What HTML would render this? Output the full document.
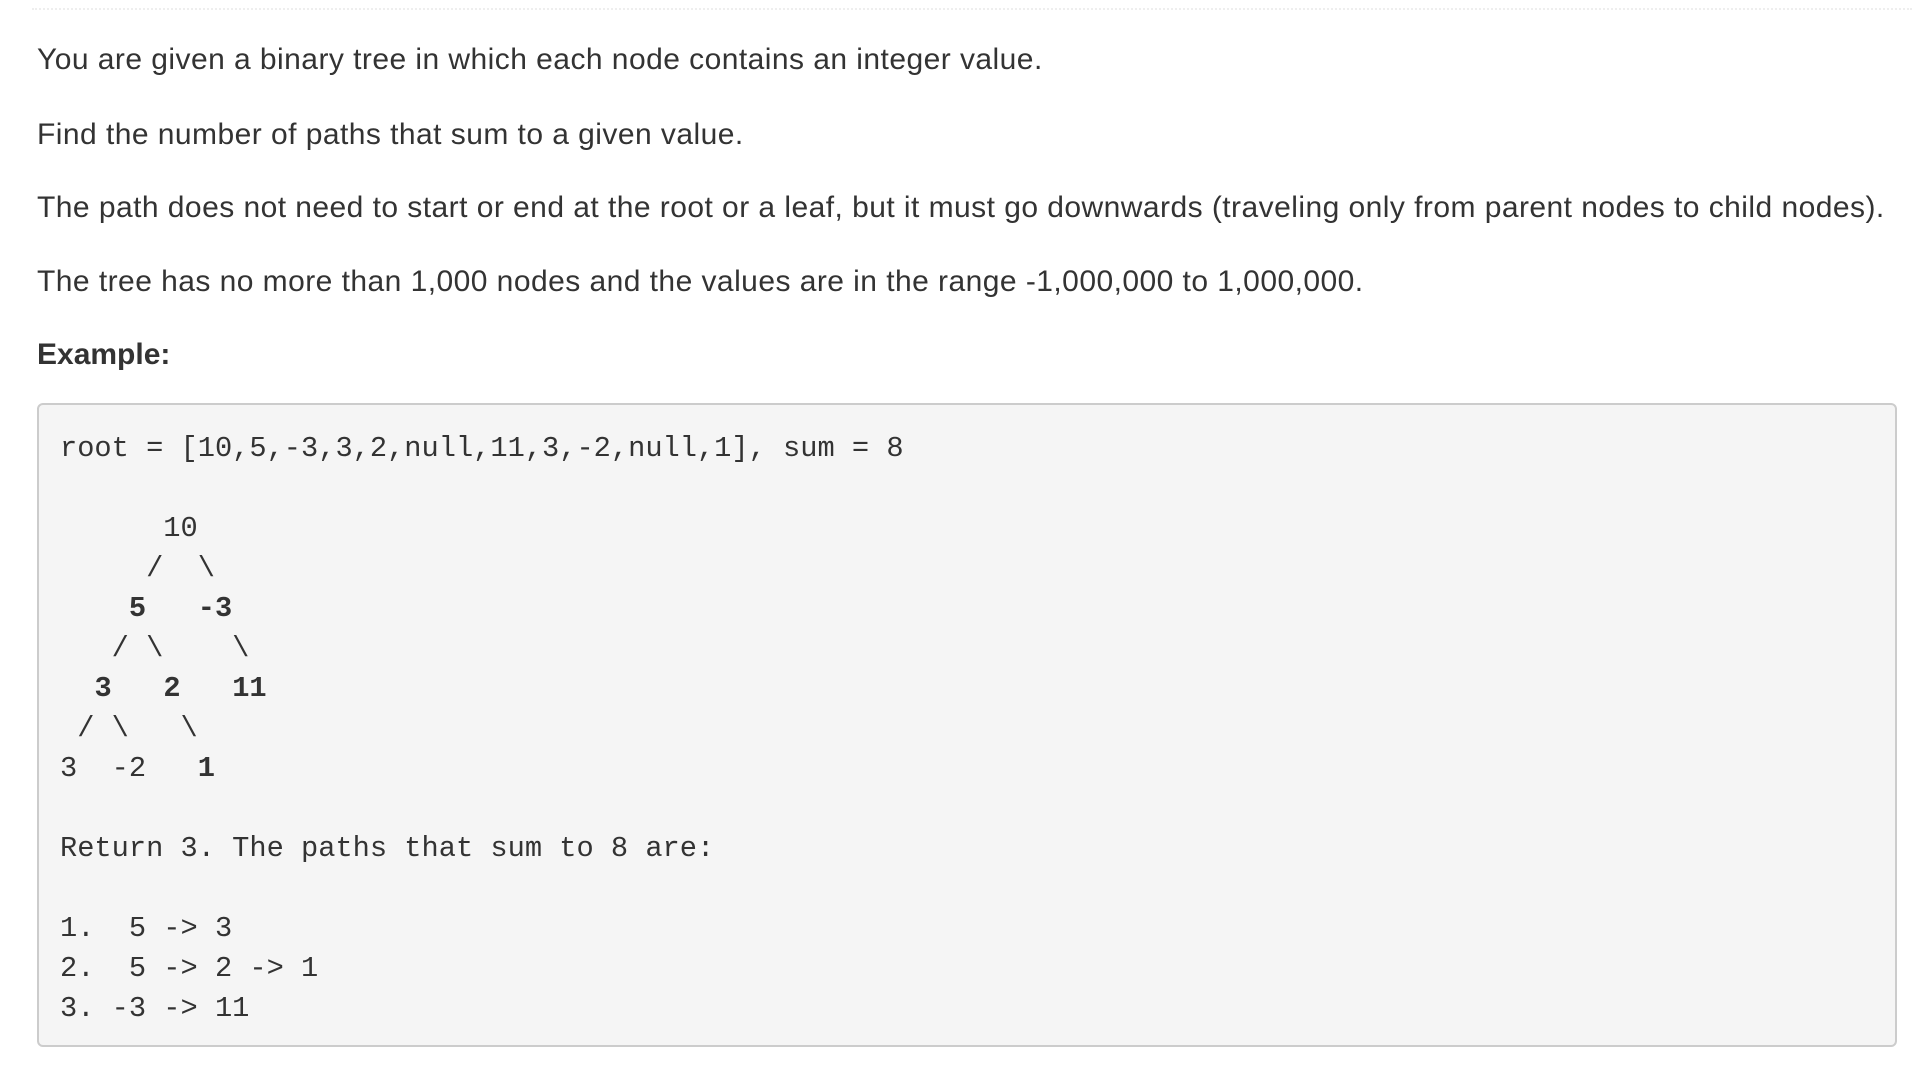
<!DOCTYPE html>
<html><head><meta charset="utf-8"><style>
html,body{margin:0;padding:0;background:#fff;width:1926px;height:1074px;overflow:hidden}
.dots{position:absolute;left:32px;top:8px;width:1880px;border-top:2px dotted #eee}
.p{position:absolute;left:37px;font:30px/40px "Liberation Sans",Arial,sans-serif;letter-spacing:0.45px;color:#333;white-space:nowrap}
.box{position:absolute;left:37px;top:403px;width:1856px;height:640px;background:#f5f5f5;border:2px solid #ccc;border-radius:6px}
pre{position:absolute;left:60px;top:429px;margin:0;font:28.7px/40px "Liberation Mono",monospace;color:#333}
</style></head><body>
<div class="dots"></div>
<div class="p" style="top:40px">You are given a binary tree in which each node contains an integer value.</div>
<div class="p" style="top:115px">Find the number of paths that sum to a given value.</div>
<div class="p" style="top:188px">The path does not need to start or end at the root or a leaf, but it must go downwards (traveling only from parent nodes to child nodes).</div>
<div class="p" style="top:262px">The tree has no more than 1,000 nodes and the values are in the range -1,000,000 to 1,000,000.</div>
<div class="p" style="top:335px;font-weight:bold;letter-spacing:0">Example:</div>
<div class="box"></div>
<pre>root = [10,5,-3,3,2,null,11,3,-2,null,1], sum = 8

      10
     /  \
    <b>5</b>   <b>-3</b>
   / \    \
  <b>3</b>   <b>2</b>   <b>11</b>
 / \   \
3  -2   <b>1</b>

Return 3. The paths that sum to 8 are:

1.  5 -&gt; 3
2.  5 -&gt; 2 -&gt; 1
3. -3 -&gt; 11</pre>
</body></html>
